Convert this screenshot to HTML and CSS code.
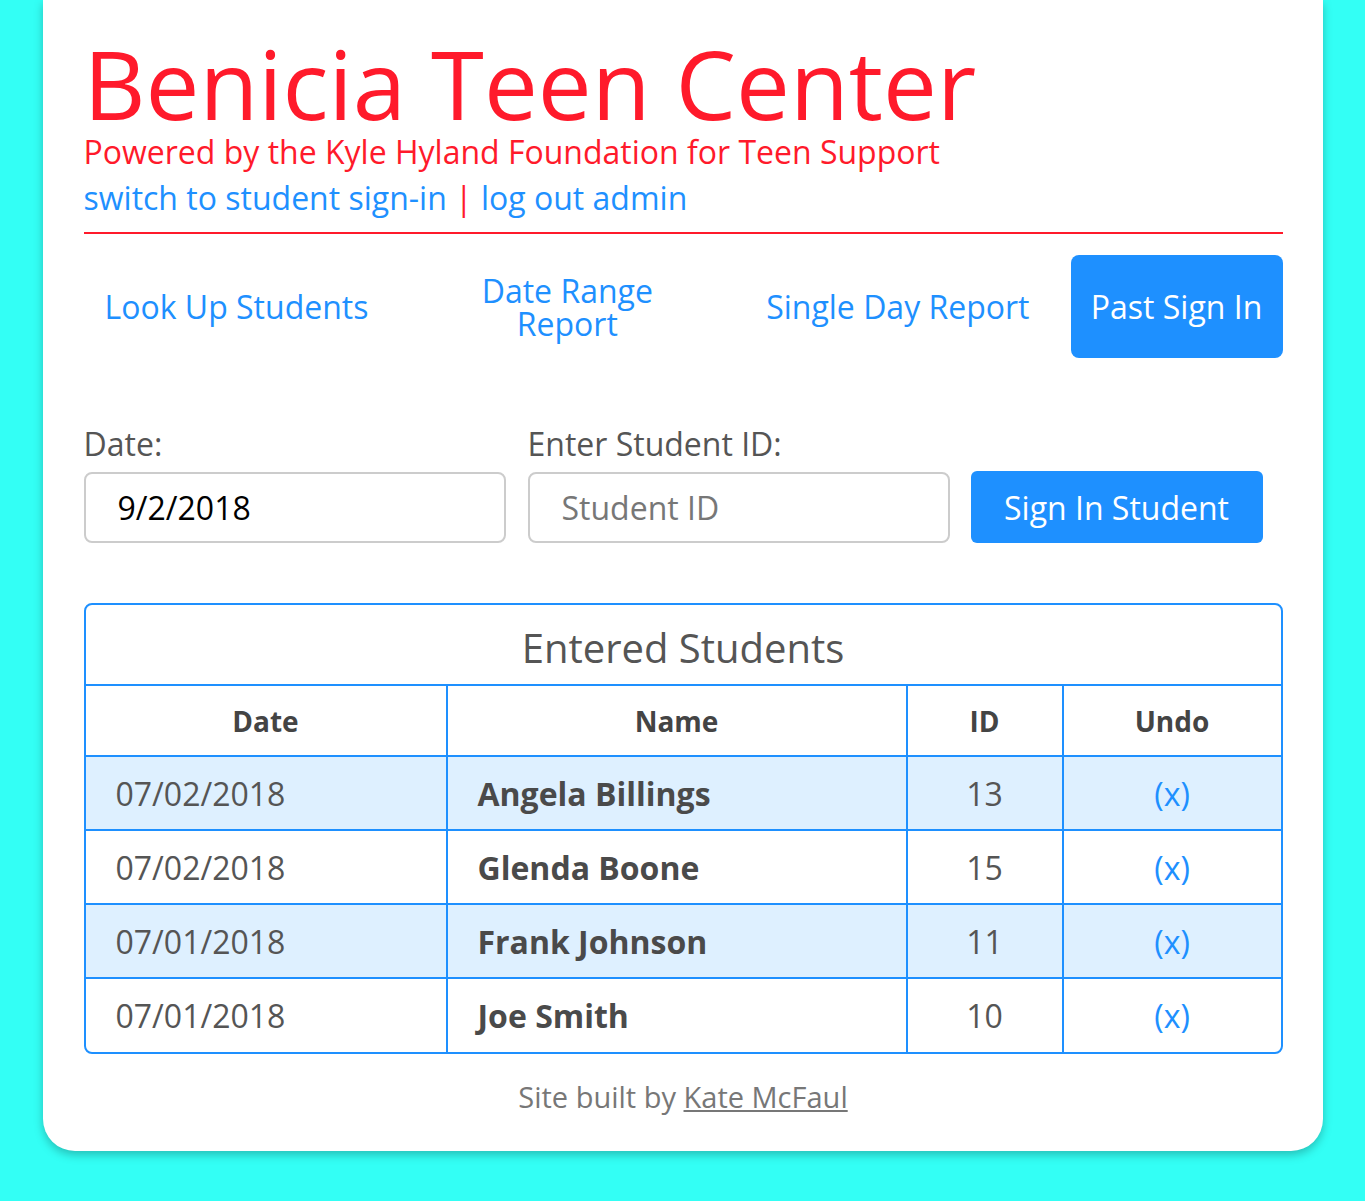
FILE: index.html
```html
<!DOCTYPE html>
<html>
<head>
<meta charset="utf-8">
<link rel="stylesheet" href="styles.css">
</head>
<body>
<div class="card">
  <header class="header">
    <h1 class="title">Benicia Teen Center</h1>
    <p class="subtitle">Powered by the Kyle Hyland Foundation for Teen Support</p>
    <p class="links"><a href="#">switch to student sign-in</a> <span class="sep">|</span> <a href="#">log out admin</a></p>
  </header>
  <nav class="nav">
    <a class="nav-item" href="#">Look Up Students</a>
    <a class="nav-item nav-wide" href="#"><span class="nav-wrap">Date Range Report</span></a>
    <a class="nav-item nav-third" href="#">Single Day Report</a>
    <a class="nav-item active" href="#">Past Sign In</a>
  </nav>
  <form class="form">
    <div class="field">
      <label class="label">Date:</label>
      <input class="input" type="text" value="9/2/2018">
    </div>
    <div class="field">
      <label class="label">Enter Student ID:</label>
      <input class="input" type="text" placeholder="Student ID">
    </div>
    <button class="submit" type="button">Sign In Student</button>
  </form>
  <div class="table-wrap">
    <table class="table">
      <caption class="caption">Entered Students</caption>
      <thead>
        <tr><th class="c-date">Date</th><th class="c-name">Name</th><th class="c-id">ID</th><th class="c-undo">Undo</th></tr>
      </thead>
      <tbody>
        <tr class="odd"><td class="date">07/02/2018</td><td class="name">Angela Billings</td><td class="id">13</td><td class="undo"><a href="#">(x)</a></td></tr>
        <tr><td class="date">07/02/2018</td><td class="name">Glenda Boone</td><td class="id">15</td><td class="undo"><a href="#">(x)</a></td></tr>
        <tr class="odd"><td class="date">07/01/2018</td><td class="name">Frank Johnson</td><td class="id">11</td><td class="undo"><a href="#">(x)</a></td></tr>
        <tr><td class="date">07/01/2018</td><td class="name">Joe Smith</td><td class="id">10</td><td class="undo"><a href="#">(x)</a></td></tr>
      </tbody>
    </table>
  </div>
  <footer class="footer">Site built by <a href="#">Kate McFaul</a></footer>
</div>
</body>
</html>
```
FILE: styles.css
```css
* { box-sizing: border-box; }
html, body { margin: 0; padding: 0; }
body {
  background: #33fff5;
  font-family: "Open Sans", "Noto Sans", sans-serif;
  color: #555;
  height: 1201px;
  overflow: hidden;
}
.card {
  width: 1280px;
  margin: 0 auto;
  background: #fff;
  border-radius: 0 0 32px 32px;
  box-shadow: 0 4px 10px rgba(0, 0, 0, 0.25);
  padding: 34px 40px 35px 41px;
}
.header {
  border-bottom: 2px solid #ff1a2b;
  padding-bottom: 14px;
}
.title {
  margin: 0;
  font-size: 96px;
  font-weight: 400;
  line-height: 98px;
  color: #ff1a2b;
}
.subtitle {
  margin: 0;
  font-size: 32px;
  line-height: 40px;
  color: #ff1a2b;
}
.links {
  margin: 6px 0 0;
  font-size: 32px;
  line-height: 40px;
}
.links a { color: #1e90ff; text-decoration: none; }
.sep { color: #ff1a2b; }

.nav {
  display: flex;
  align-items: stretch;
  margin-top: 21px;
  height: 103px;
}
.nav-item {
  display: flex;
  align-items: center;
  justify-content: center;
  text-align: center;
  padding: 0 21px;
  font-size: 32px;
  line-height: 33px;
  color: #1e90ff;
  text-decoration: none;
  border-radius: 8px;
}
.nav-wide { flex: 1; padding: 0; }
.nav-wrap { display: block; width: 200px; }
.nav-third { margin-right: 20px; }
.nav-item.active {
  background: #1e90ff;
  color: #fff;
  width: 212px;
  padding: 0;
}

.form {
  display: flex;
  align-items: flex-end;
  gap: 22px;
  margin-top: 66px;
}
.field { display: flex; flex-direction: column; width: 422px; }
.label {
  font-size: 32px;
  line-height: 40px;
  color: #555;
  margin-bottom: 8px;
}
.input {
  height: 71px;
  border: 2px solid #ccc;
  border-radius: 8px;
  padding: 0 32px;
  font-family: "Open Sans", "Noto Sans", sans-serif;
  font-size: 32px;
  color: #000;
  background: #fff;
  outline: none;
}
.input::placeholder { color: #777; }
.submit {
  width: 292px;
  height: 72px;
  border: none;
  border-radius: 6px;
  background: #1e90ff;
  color: #fff;
  font-family: "Open Sans", "Noto Sans", sans-serif;
  font-size: 32px;
  padding: 0;
  margin-left: -1px;
}

.table-wrap {
  margin-top: 60px;
  border: 2px solid #1e90ff;
  border-radius: 8px;
  overflow: hidden;
}
.table {
  width: 100%;
  border-collapse: collapse;
  table-layout: fixed;
}
.caption {
  height: 81px;
  line-height: 81px;
  font-size: 40px;
  color: #555;
  border-bottom: 2px solid #1e90ff;
  caption-side: top;
  padding-top: 2px;
}
.c-date { width: 361px; }
.c-name { width: 460px; }
.c-id { width: 156px; }
.table th {
  height: 70px;
  font-size: 28px;
  font-weight: 700;
  color: #444;
  text-align: center;
  border-right: 2px solid #1e90ff;
  border-bottom: 2px solid #1e90ff;
  padding: 0;
}
.table td {
  height: 74px;
  font-size: 32px;
  color: #555;
  border-right: 2px solid #1e90ff;
  border-bottom: 2px solid #1e90ff;
  padding: 0 30px;
}
.table th:last-child, .table td:last-child { border-right: none; }
.table tbody tr:last-child td { border-bottom: none; }
.table tr.odd td { background: #def0ff; }
.table td.name { font-weight: 700; color: #4a4a4a; }
.table td.id, .table td.undo { text-align: center; padding: 0; }
.undo a { color: #1e90ff; text-decoration: none; }

.footer {
  margin-top: 24px;
  text-align: center;
  font-size: 29px;
  line-height: 38px;
  color: #777;
}
.footer a { color: #777; text-decoration: underline; }
```
